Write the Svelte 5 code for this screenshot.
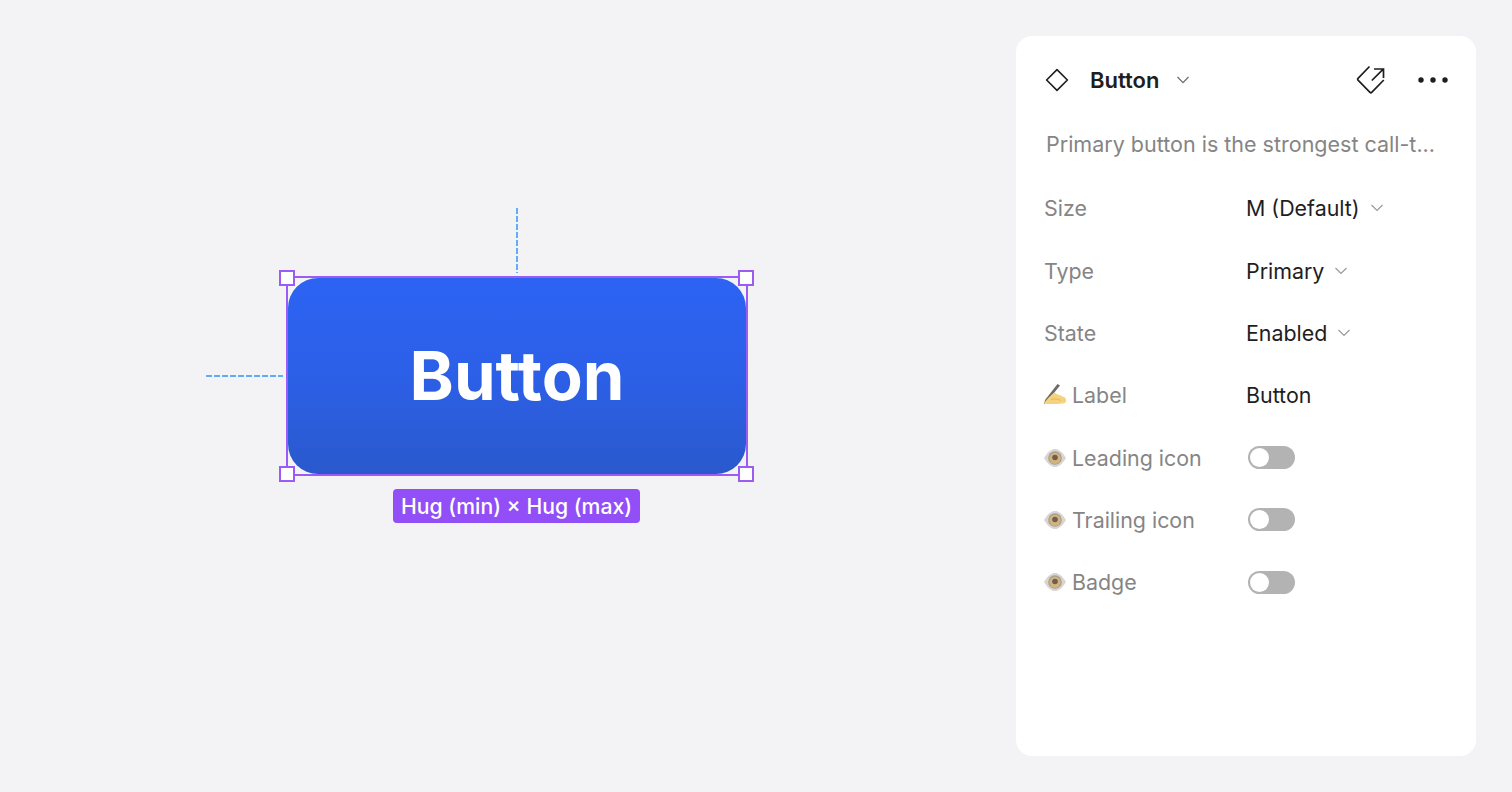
<script>
    const rows = [
        {name: "Size", value: "M (Default)", kind: "select"},
        {name: "Type", value: "Primary", kind: "select"},
        {name: "State", value: "Enabled", kind: "select"},
        {name: "Label", value: "Button", kind: "text", icon: "hand"},
        {name: "Leading icon", kind: "toggle", icon: "eye"},
        {name: "Trailing icon", kind: "toggle", icon: "eye"},
        {name: "Badge", kind: "toggle", icon: "eye"}
    ];
</script>

<main class="page">
    <section class="canvas">
        <div class="frame">
            <span class="guide top"></span>
            <span class="guide left"></span>
            <div class="button">Button</div>
            <span class="handle tl"></span>
            <span class="handle tr"></span>
            <span class="handle bl"></span>
            <span class="handle br"></span>
            <span class="tag">Hug (min) × Hug (max)</span>
        </div>
    </section>

    <aside class="panel">
        <header class="head">
            <svg class="diamond" width="26" height="26" viewBox="0 0 26 26" fill="none" stroke="#1e1e1e" stroke-width="1.6">
                <path d="M13 2.6 23.4 13 13 23.4 2.6 13Z" stroke-linejoin="round"/>
            </svg>
            <strong class="title">Button</strong>
            <svg class="chev" width="14" height="8" viewBox="0 0 14 8" fill="none" stroke="#6f6f6f" stroke-width="1.3"><path d="M1.5 1 7 6.6 12.5 1"/></svg>
            <svg class="jump" width="30" height="30" viewBox="0 0 30 30" fill="none" stroke="#1e1e1e" stroke-width="1.7">
                <path d="M13.500 1.500 2 13.400c-.5.5-.5 1.200 0 1.700L14 27.300c.5.5 1.200.5 1.700 0L27.800 15" stroke-linejoin="round"/>
                <path d="M15.800 15.500 27 4.300M18 4h9.500v9"/>
            </svg>
            <svg class="dots" width="30" height="8" viewBox="0 0 30 8" fill="#1e1e1e">
                <circle cx="3" cy="4" r="2.700"/><circle cx="15" cy="4" r="2.700"/><circle cx="27" cy="4" r="2.700"/>
            </svg>
        </header>
        <p class="desc">Primary button is the strongest call-t...</p>
        <div class="props">
            {#each rows as row}
                <div class="row">
                    <div class="name">
                        {#if row.icon === "hand"}
                            <svg class="emoji" width="24" height="22" viewBox="0 0 24 22">
                                <path d="M14.500 0 17 1.500 4.500 17 1 20.500 2 16z" fill="#6f6b67"/>
                                <path d="M1 19.500C3 16 7 12 10 9.500c1.500-1 2.500 0 4 .5 3 1.200 6 2.500 8 3.500 1.500 1 1.500 4.500 0 5.500-3 1-16 1.500-21 .5z" fill="#f5d37e"/>
                                <path d="M8 15.500c3-1 7-.5 10 1" fill="none" stroke="#e4b75f" stroke-width="1"/>
                            </svg>
                        {:else if row.icon === "eye"}
                            <svg class="emoji" width="24" height="22" viewBox="0 0 24 22">
                                <path d="M1 11C5 4.500 8.500 2 12 2s7 2.500 11 9c-4 6.500-7.500 9-11 9S5 17.500 1 11z" fill="#d9d5d3"/>
                                <circle cx="12" cy="11" r="6.800" fill="#a89e92"/>
                                <circle cx="12" cy="11.300" r="5.600" fill="#d3b57c"/>
                                <circle cx="12" cy="10.500" r="2.800" fill="#6a5f54"/>
                            </svg>
                        {/if}
                        {row.name}
                    </div>
                    {#if row.kind === "toggle"}
                        <span class="switch"><span class="knob"></span></span>
                    {:else}
                        <div class="value">
                            {row.value}
                            {#if row.kind === "select"}
                                <svg width="14" height="8" viewBox="0 0 14 8" fill="none" stroke="#9a9a9a" stroke-width="1.2"><path d="M1.500 1 7 6.500 12.500 1"/></svg>
                            {/if}
                        </div>
                    {/if}
                </div>
            {/each}
        </div>
    </aside>
</main>

<style>
    :global(body) {
        background: #f3f3f5;
        font-family: Inter, "Liberation Sans", sans-serif;
    }

    .page {
        display: flex;
        height: 792px;
        overflow: hidden;
    }

    .canvas {
        width: 1016px;
        padding: 276px 0 0 286px;
        box-sizing: border-box;
    }

    .frame {
        position: relative;
        width: 462px;
        height: 200px;
        box-sizing: border-box;
        border: 2px solid #9a5cf5;
    }

    .button {
        display: flex;
        align-items: center;
        justify-content: center;
        height: 100%;
        padding-bottom: 2px;
        box-sizing: border-box;
        border-radius: 30px;
        background: linear-gradient(#2d63f3 0%, #2c60e9 45%, #2a59cd 100%);
        color: #fff;
        font-size: 67px;
        font-weight: 700;
    }

    .handle {
        position: absolute;
        width: 12px;
        height: 12px;
        background: #fff;
        border: 2px solid #9a5cf5;
    }

    .tl { left: -9px; top: -8px; }
    .tr { right: -8px; top: -8px; }
    .bl { left: -9px; bottom: -8px; }
    .br { right: -8px; bottom: -8px; }

    .tag {
        position: absolute;
        left: 105px;
        top: 211px;
        padding: 0 8px;
        height: 34px;
        line-height: 34px;
        border-radius: 4px;
        background: #924ff7;
        color: #fff;
        font-size: 21.2px;
        font-weight: 500;
        white-space: nowrap;
    }

    .guide {
        position: absolute;
    }

    .guide.top {
        left: 228px;
        top: -70px;
        width: 2px;
        height: 65px;
        background: repeating-linear-gradient(180deg, #5fadfd 0 6px, transparent 6px 8px);
    }

    .guide.left {
        left: -82px;
        top: 97px;
        width: 77px;
        height: 2px;
        background: repeating-linear-gradient(90deg, #5fadfd 0 6px, transparent 6px 8px);
    }

    .panel {
        width: 460px;
        height: 720px;
        margin-top: 36px;
        padding: 0 28px;
        box-sizing: border-box;
        background: #fff;
        border-radius: 16px;
    }

    .head {
        display: flex;
        align-items: center;
        height: 88px;
    }

    .diamond {
        margin-right: 20px;
    }

    .title {
        font-size: 22px;
        font-weight: 600;
        color: #1e1e1e;
    }

    .chev {
        margin-left: 17px;
    }

    .jump {
        margin-left: auto;
    }

    .dots {
        margin-left: 32px;
    }

    .desc {
        margin: 0 0 0 2px;
        font-size: 21.5px;
        line-height: 40px;
        color: #858585;
    }

    .props {
        display: grid;
        grid-auto-rows: 62.33px;
        margin-top: 13.2px;
    }

    .row {
        display: grid;
        grid-template-columns: 202px 1fr;
        align-items: center;
    }

    .name {
        display: flex;
        align-items: center;
        gap: 5px;
        font-size: 21.4px;
        color: #858585;
    }

    .emoji {
        margin-left: -1px;
    }

    .value {
        display: flex;
        align-items: center;
        gap: 10px;
        font-size: 21.4px;
        color: #1e1e1e;
    }

    .switch {
        display: flex;
        align-items: center;
        width: 47px;
        height: 23px;
        margin-left: 2px;
        padding: 2px;
        box-sizing: border-box;
        border-radius: 12px;
        background: #b3b3b3;
    }

    .knob {
        width: 19px;
        height: 19px;
        border-radius: 50%;
        background: #fff;
    }
</style>
